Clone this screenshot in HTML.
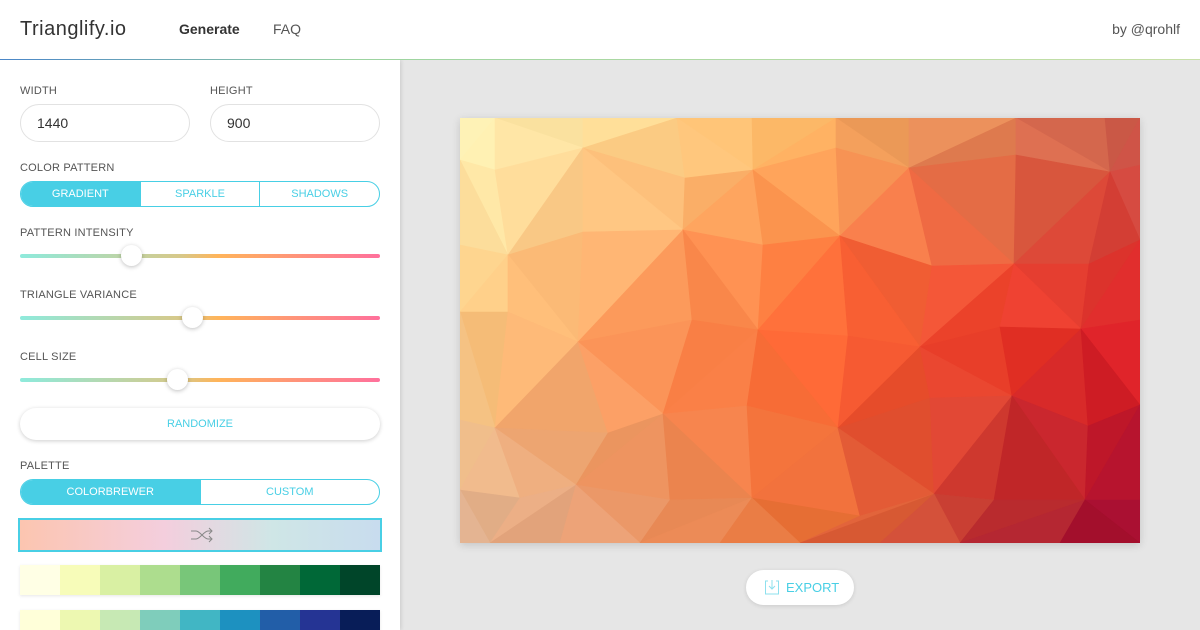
<!DOCTYPE html>
<html><head><meta charset="utf-8"><style>
*{box-sizing:border-box;margin:0;padding:0}
html,body{width:1200px;height:630px;overflow:hidden}
body{background:#e6e6e6;font-family:"Liberation Sans",sans-serif;position:relative}
.hdr{position:absolute;left:0;top:0;width:1200px;height:60px;background:#fff;z-index:3}
.hdr:after{content:"";position:absolute;left:0;bottom:0;width:100%;height:1px;background:linear-gradient(90deg,#4a86c8,#9cd4a0 30%,#c8e0a8)}
.logo{position:absolute;left:20px;top:18px;font-size:20px;color:#333;letter-spacing:.5px}
.nav{position:absolute;top:21px;font-size:15px;color:#555}
.side{position:absolute;left:0;top:60px;width:400px;height:570px;background:#fff;box-shadow:1px 0 4px rgba(0,0,0,.12)}
.lbl{position:absolute;left:20px;font-size:11px;color:#555;letter-spacing:.2px}
.inp{position:absolute;top:44px;width:170px;height:38px;border:1px solid #e2e2e2;border-radius:19px;padding-left:16px;line-height:36px;font-size:14px;color:#333}
.seg{position:absolute;left:20px;width:360px;height:26px;border:1px solid #48cfe5;border-radius:13px;overflow:hidden;display:flex}
.seg div{flex:1;text-align:center;line-height:24px;font-size:11px;color:#48cfe5;border-left:1px solid #48cfe5}
.seg div:first-child{border-left:none}
.seg .on{background:#48cfe5;color:#fff}
.trk{position:absolute;left:20px;width:360px;height:4px;border-radius:2px;background:linear-gradient(90deg,#8eeadc,#d8c888 45%,#ffb45a 55%,#ff709c)}
.thumb{position:absolute;top:-9px;width:21px;height:21px;border-radius:50%;background:#fff;box-shadow:0 1px 4px rgba(0,0,0,.25)}
.pal{position:absolute;left:20px;width:360px;height:30px;display:flex;box-shadow:0 1px 3px rgba(0,0,0,.1)}
.pal div{flex:1}
</style></head><body>
<div class="hdr">
<div class="logo">Trianglify.io</div>
<div class="nav" style="left:179px;font-weight:bold;color:#333;font-size:14px;top:21px">Generate</div>
<div class="nav" style="left:273px;font-size:14px">FAQ</div>
<div class="nav" style="right:20px;font-size:14px">by @qrohlf</div>
</div>
<div class="side">
<div class="lbl" style="top:25px">WIDTH</div>
<div class="lbl" style="top:25px;left:210px">HEIGHT</div>
<div class="inp" style="left:20px">1440</div>
<div class="inp" style="left:210px">900</div>
<div class="lbl" style="top:102px">COLOR PATTERN</div>
<div class="seg" style="top:121px"><div class="on">GRADIENT</div><div>SPARKLE</div><div>SHADOWS</div></div>
<div class="lbl" style="top:167px">PATTERN INTENSITY</div>
<div class="trk" style="top:194px"><div class="thumb" style="left:101px"></div></div>
<div class="lbl" style="top:229px">TRIANGLE VARIANCE</div>
<div class="trk" style="top:256px"><div class="thumb" style="left:162px"></div></div>
<div class="lbl" style="top:291px">CELL SIZE</div>
<div class="trk" style="top:318px"><div class="thumb" style="left:147px"></div></div>
<div style="position:absolute;left:20px;top:348px;width:360px;height:32px;border-radius:16px;background:#fff;box-shadow:0 1px 4px rgba(0,0,0,.2);text-align:center;line-height:32px;font-size:11px;color:#48cfe5">RANDOMIZE</div>
<div class="lbl" style="top:400px">PALETTE</div>
<div class="seg" style="top:419px"><div class="on">COLORBREWER</div><div>CUSTOM</div></div>
<div style="position:absolute;left:18px;top:458px;width:364px;height:34px;border:2px solid #48cfe5;background:linear-gradient(90deg,#fcc5b0,#f4cedd 40%,#cfe6e6 70%,#c8dcee)">
<svg width="24" height="16" viewBox="0 0 24 16" style="position:absolute;left:170px;top:7px" fill="none" stroke="#888" stroke-width="1"><path d="M1 4h5c4 0 8 8 12 8h4M1 12h5c4 0 8-8 12-8h4M19 1l3 3-3 3M19 9l3 3-3 3"/></svg>
</div>
<div class="pal" style="top:505px"><div style="background:#ffffe5"></div><div style="background:#f7fcb9"></div><div style="background:#d9f0a3"></div><div style="background:#addd8e"></div><div style="background:#78c679"></div><div style="background:#41ab5d"></div><div style="background:#238443"></div><div style="background:#006837"></div><div style="background:#004529"></div></div>
<div class="pal" style="top:550px"><div style="background:#ffffd9"></div><div style="background:#edf8b1"></div><div style="background:#c7e9b4"></div><div style="background:#7fcdbb"></div><div style="background:#41b6c4"></div><div style="background:#1d91c0"></div><div style="background:#225ea8"></div><div style="background:#253494"></div><div style="background:#081d58"></div></div>
</div>
<svg id="art" width="680" height="425" style="position:absolute;left:460px;top:118px;box-shadow:0 2px 8px rgba(0,0,0,.15)"></svg>
<div style="position:absolute;left:746px;top:570px;width:108px;height:35px;border-radius:18px;background:#fff;box-shadow:0 1px 4px rgba(0,0,0,.12);font-size:13px;color:#48cfe5;line-height:35px;padding-left:40px">EXPORT
<svg width="16" height="16" viewBox="0 0 16 16" style="position:absolute;left:18px;top:9px" fill="none" stroke="#8ee0ee" stroke-width="1"><path d="M4 2H1.5v13h13V2H12M8 1v9M5 7l3 3 3-3"/></svg></div>
<script>
var R=[[460,495,583,677,752,836,909,1016,1105,1140].map(x=>[x,118]),
[[460,160],[495,170],[583,148],[685,178],[753,170],[836,148],[909,168],[1016,155],[1110,172],[1140,165]],
[[460,245],[508,255],[583,232],[683,230],[763,245],[840,236],[932,266],[1014,264],[1089,264],[1140,240]],
[[460,312],[508,312],[578,342],[692,320],[758,330],[848,336],[920,347],[1000,327],[1081,329],[1140,320]],
[[460,420],[495,428],[608,433],[663,414],[747,406],[838,428],[930,398],[1012,396],[1088,426],[1140,405]],
[[460,490],[520,498],[576,485],[670,500],[752,498],[860,516],[934,494],[994,500],[1085,500],[1140,500]],
[460,490,560,640,720,800,880,960,1060,1140].map(x=>[x,543])];
var G=[[[255,248,190],[254,190,105],[200,90,75]],[[254,205,130],[255,100,48],[225,30,35]],[[225,180,150],[235,120,60],[150,0,45]]];
function lerp(a,b,t){return a.map((v,i)=>v+(b[i]-v)*t)}
function col(u,v){var i=u<.5?0:1,tu=u<.5?u*2:(u-.5)*2,j=v<.5?0:1,tv=v<.5?v*2:(v-.5)*2;
var a=lerp(G[j][i],G[j][i+1],tu),b=lerp(G[j+1][i],G[j+1][i+1],tu);return lerp(a,b,tv)}
var s="",k=0;function tri(p){var cx=(p[0][0]+p[1][0]+p[2][0])/3-460,cy=(p[0][1]+p[1][1]+p[2][1])/3-118;
k++;var n=((k*37)%11-5)*1.2;
var c=col(cx/680,cy/425).map(v=>Math.round(Math.max(0,Math.min(255,v+n))));
s+='<polygon points="'+p.map(q=>(q[0]-460)+','+(q[1]-118)).join(' ')+'" fill="rgb('+c+')" stroke="rgb('+c+')" stroke-width="0.6"/>'}
for(var r=0;r<6;r++)for(var c=0;c<9;c++){var a=R[r][c],b=R[r][c+1],d=R[r+1][c],e=R[r+1][c+1];
if((r+c)%2){tri([a,b,e]);tri([a,e,d])}else{tri([a,b,d]);tri([b,e,d])}}
document.getElementById('art').innerHTML=s;
</script>
</body></html>
